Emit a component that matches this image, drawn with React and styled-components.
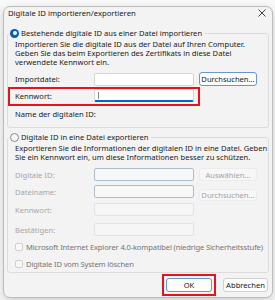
import React from 'react'
import styled, { createGlobalStyle } from 'styled-components'

const Global = createGlobalStyle`
  html, body {
    margin: 0;
    padding: 0;
    background: #f9f9f9;
    overflow: hidden;
  }
  body {
    font-family: "Noto Sans", "Open Sans", sans-serif;
    font-size: 7.6px;
    color: #1b1b1b;
  }
`

const Backdrop = styled.div`
  width: 275px;
  height: 300px;
  overflow: hidden;
  padding-top: 6px;
  box-sizing: border-box;
`

const Dialog = styled.div`
  width: 270px;
  box-sizing: border-box;
  margin-left: 3px;
  background: #f3f3f3;
  border: 1px solid #bcbcbc;
  border-radius: 7px;
  box-shadow: 0 3px 10px rgba(0, 0, 0, 0.18);
  padding-bottom: 5px;
`

const TitleBar = styled.div`
  height: 12px;
  display: flex;
  align-items: center;
  justify-content: space-between;
  padding: 0 6px 0 4px;
  font-size: 7.7px;
  line-height: 12px;
  color: #1a1a1a;
`

const Group = styled.fieldset`
  margin: ${p => p.$top}px 3px 0;
  padding: 2px 10px ${p => p.$bottom}px 7px;
  border: 1px solid #dcdcdc;
  border-radius: 3px;
  min-inline-size: 0;
`

const Legend = styled.legend`
  display: flex;
  align-items: center;
  gap: 2px;
  margin-left: -6px;
  padding: 0 2px 0 1px;
  line-height: 10px;
  color: #1a1a1a;
`

const Radio = styled.span`
  width: 9px;
  height: 9px;
  box-sizing: border-box;
  border-radius: 50%;
  flex: none;
  ${p => p.$checked
    ? `background: #005fb8; display: flex; align-items: center; justify-content: center;
       &::after { content: ''; width: 4px; height: 4px; border-radius: 50%; background: #fff; }`
    : `background: #f6f6f6; border: 1px solid #8a8a8a;`}
`

const Desc = styled.p`
  margin: 0;
  line-height: 9px;
  color: #1b1b1b;
  white-space: nowrap;
`

const Row = styled.div`
  display: flex;
  align-items: center;
  height: ${p => p.$h || 13}px;
  margin-top: ${p => p.$mt || 0}px;
`

const Label = styled.span`
  width: 79px;
  flex: none;
  color: ${p => (p.$disabled ? '#a6a6a6' : '#1b1b1b')};
  white-space: nowrap;
`

const Field = styled.div`
  width: 100px;
  height: 13px;
  box-sizing: border-box;
  flex: none;
  position: relative;
  border-radius: 2px;
  background: ${p => (p.$variant === 'disabled' ? '#f6f6f6' : p.$variant === 'readonly' ? '#f7f8fa' : '#fff')};
  border: 1px solid ${p => (p.$variant === 'disabled' ? '#e2e2e2' : p.$variant === 'readonly' ? '#aebccd' : '#d6d6d6')};
  ${p => p.$focused && `border-bottom: 2px solid #0067c0;`}
`

const Caret = styled.span`
  position: absolute;
  left: 3px;
  top: 2px;
  width: 1px;
  height: 7px;
  background: #8c8c8c;
`

const Button = styled.button`
  width: ${p => p.$w || 58}px;
  height: ${p => p.$h || 14}px;
  margin-left: ${p => p.$ml ?? 5}px;
  margin-top: ${p => p.$drop || 0}px;
  padding: 0;
  flex: none;
  box-sizing: border-box;
  font-family: inherit;
  font-size: 7.6px;
  border-radius: 3px;
  background: ${p => (p.$disabled ? '#f7f7f7' : '#fdfdfd')};
  color: ${p => (p.$disabled ? '#a3a3a3' : '#1b1b1b')};
  border: 1px solid ${p => (p.$disabled ? '#ececec' : p.$accent ? '#6f94c6' : '#d0d0d0')};
`

const Marker = styled.span`
  display: inline-flex;
  padding: 2px;
  border: 2px solid #e5131d;
  margin-top: -4px;
  margin-bottom: -4px;
`

const Highlight = styled.div`
  display: flex;
  align-items: center;
  width: fit-content;
  margin: 1px 0 0 -7px;
  padding: 0 4px 2px 5px;
  border: 2px solid #e5131d;
`

const Plain = styled.div`
  margin-top: ${p => p.$mt || 0}px;
  line-height: 9px;
`

const CheckRow = styled.div`
  display: flex;
  align-items: center;
  gap: 3px;
  height: 10px;
  margin-top: ${p => p.$mt}px;
  color: #767676;
  letter-spacing: -0.15px;
  white-space: nowrap;
`

const Box = styled.span`
  width: 8px;
  height: 8px;
  box-sizing: border-box;
  flex: none;
  border: 1px solid #cfcfcf;
  border-radius: 2px;
  background: #f8f8f8;
`

const Footer = styled.div`
  display: flex;
  justify-content: flex-end;
  align-items: center;
  gap: 7px;
  margin-top: 5px;
  padding-right: 4px;
`

const CloseIcon = () => (
  <svg width="8" height="8" viewBox="0 0 8 8">
    <path d="M0.5 0.5 L7.5 7.5 M7.5 0.5 L0.5 7.5" stroke="#2b2b2b" strokeWidth="0.9" fill="none" />
  </svg>
)

export default function App() {
  return (
    <Backdrop>
      <Global />
      <Dialog>
        <TitleBar>
          <span>Digitale ID importieren/exportieren</span>
          <CloseIcon />
        </TitleBar>

        <Group $top={9} $bottom={8}>
          <Legend><Radio $checked />Bestehende digitale ID aus einer Datei importieren</Legend>
          <Desc>
            Importieren Sie die digitale ID aus der Datei auf Ihren Computer.<br />
            Geben Sie das beim Exportieren des Zertifikats in diese Datei<br />
            verwendete Kennwort ein.
          </Desc>
          <Row $h={14} $mt={5}>
            <Label>Importdatei:</Label>
            <Field />
            <Button $accent>Durchsuchen...</Button>
          </Row>
          <Highlight>
            <Label>Kennwort:</Label>
            <Field $focused><Caret /></Field>
          </Highlight>
          <Plain $mt={4}>Name der digitalen ID:</Plain>
        </Group>

        <Group $top={4} $bottom={3}>
          <Legend><Radio />Digitale ID in eine Datei exportieren</Legend>
          <Desc>
            Exportieren Sie die Informationen der digitalen ID in eine Datei. Geben<br />
            Sie ein Kennwort ein, um diese Informationen besser zu schützen.
          </Desc>
          <Row $mt={6}>
            <Label $disabled>Digitale ID:</Label>
            <Field $variant="readonly" />
            <Button $disabled $h={13}>Auswählen...</Button>
          </Row>
          <Row $mt={4}>
            <Label $disabled>Dateiname:</Label>
            <Field $variant="readonly" />
            <Button $disabled $h={12} $drop={6}>Durchsuchen...</Button>
          </Row>
          <Row $mt={5}>
            <Label $disabled>Kennwort:</Label>
            <Field $variant="disabled" />
          </Row>
          <Row $mt={7}>
            <Label $disabled>Bestätigen:</Label>
            <Field $variant="disabled" />
          </Row>
          <CheckRow $mt={6}>
            <Box />Microsoft Internet Explorer 4.0-kompatibel (niedrige Sicherheitsstufe)
          </CheckRow>
          <CheckRow $mt={7}>
            <Box />Digitale ID vom System löschen
          </CheckRow>
        </Group>

        <Footer>
          <Marker>
            <Button $w={46} $ml={0} $accent>OK</Button>
          </Marker>
          <Button $w={45} $ml={0}>Abbrechen</Button>
        </Footer>
      </Dialog>
    </Backdrop>
  )
}
